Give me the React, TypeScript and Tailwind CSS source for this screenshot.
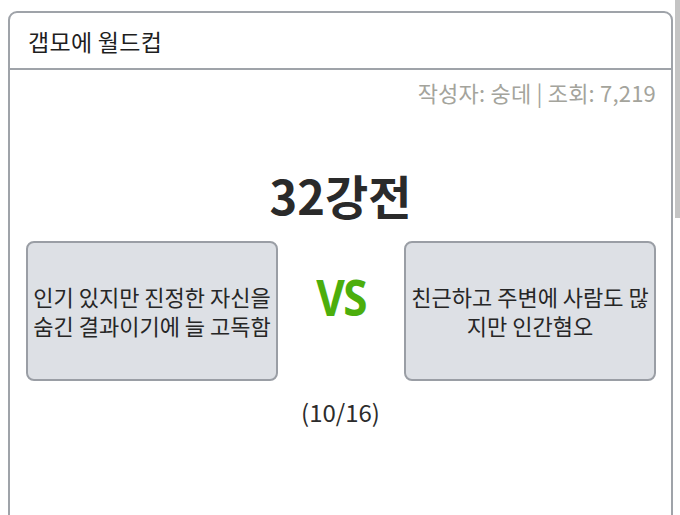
import React from "react";

export default function App() {
  return (
    <div
      className="relative w-[680px] h-[515px] overflow-hidden bg-white"
      style={{ fontFamily: '"Noto Sans CJK KR", "Noto Sans", sans-serif' }}
    >
      <div className="absolute right-0 top-0 w-[5px] h-[218px] bg-[#c4c4c4]" />
      <div className="ml-[8px] mt-[11px] w-[665px] h-[520px] border-2 border-[#9fa3a9] rounded-[9px] flex flex-col">
        <div className="h-[57px] border-b-2 border-[#9fa3a9] flex items-center pl-[18px]">
          <span className="text-[23px] leading-[30px] text-[#1e1e1e] tracking-[0.3px]">갭모에 월드컵</span>
        </div>
        <div className="flex flex-col">
          <div className="flex justify-end pr-[15px] pt-[7px]">
            <span className="text-[22px] leading-[30px] text-[#a4a49c] tracking-[0.2px]">작성자: 숭데 | 조회: 7,219</span>
          </div>
          <div className="flex justify-center mt-[60px]">
            <span className="text-[47px] font-bold text-[#2a2a2a] leading-[56px]">32강전</span>
          </div>
          <div className="flex items-center justify-between pl-[16px] pr-[15px] mt-[18px]">
            <div className="w-[252px] h-[140px] bg-[#dde0e5] border-2 border-[#9a9ea5] rounded-[8px] flex items-center justify-center text-center">
              <span className="text-[22px] leading-[29px] text-[#262626] whitespace-nowrap">
                인기 있지만 진정한 자신을
                <br />
                숨긴 결과이기에 늘 고독함
              </span>
            </div>
            <div className="flex-1 flex justify-center mb-[28px]">
              <span
                className="text-[50px] font-bold text-[#4cae0c] leading-none scale-x-[0.88] tracking-[-2px]"
                style={{ fontFamily: '"Open Sans", sans-serif' }}
              >
                VS
              </span>
            </div>
            <div className="w-[252px] h-[140px] bg-[#dde0e5] border-2 border-[#9a9ea5] rounded-[8px] flex items-center justify-center text-center">
              <span className="text-[22px] leading-[29px] text-[#262626] whitespace-nowrap">
                친근하고 주변에 사람도 많
                <br />
                지만 인간혐오
              </span>
            </div>
          </div>
          <div className="flex justify-center mt-[16px]">
            <span className="text-[24px] leading-[30px] text-[#2c2c2c]">(10/16)</span>
          </div>
        </div>
      </div>
    </div>
  );
}
